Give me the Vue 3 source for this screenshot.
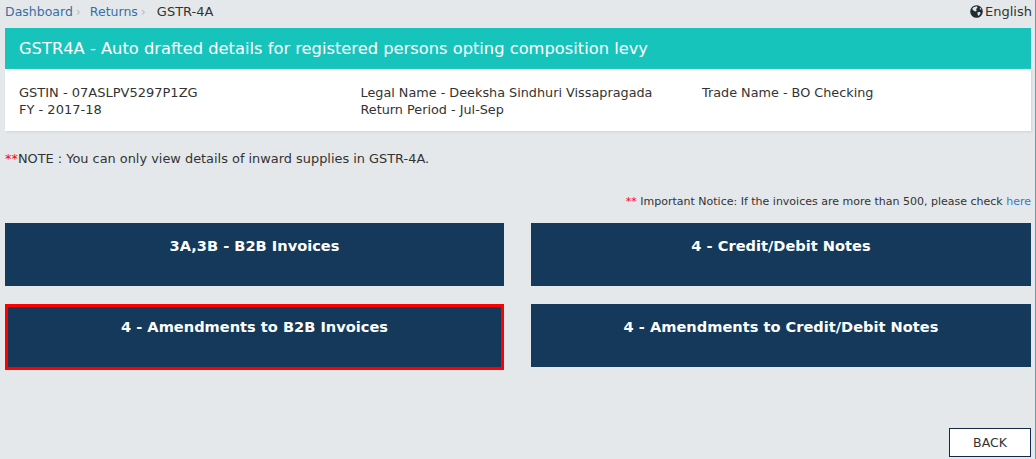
<script setup>
const info = [
  ['GSTIN - 07ASLPV5297P1ZG', 'FY - 2017-18'],
  ['Legal Name - Deeksha Sindhuri Vissapragada', 'Return Period - Jul-Sep'],
  ['Trade Name - BO Checking']
]
const tiles = [
  { label: '3A,3B - B2B Invoices' },
  { label: '4 - Credit/Debit Notes' },
  { label: '4 - Amendments to B2B Invoices', active: true },
  { label: '4 - Amendments to Credit/Debit Notes' }
]
</script>

<template>
  <div class="page">
    <div class="topbar">
      <nav class="crumbs">
        <a class="link">Dashboard</a><span class="sep">›</span>
        <a class="link">Returns</a><span class="sep wide">›</span>
        <span class="current">GSTR-4A</span>
      </nav>
      <div class="lang">
        <svg class="globe" viewBox="0 0 12 12" width="13" height="13">
          <circle cx="6" cy="6" r="5.8" fill="#1f2a33" />
          <path d="M3.2 2 L6.2 1.2 L7 2.6 L5.6 3.8 L6.2 5.2 L4.8 6 L3.2 5 L2 3.8 Z" fill="#dfe4e8" />
          <path d="M6.8 6.6 L9.2 6.4 L9.8 7.6 L8.2 10 L7.2 9.4 Z" fill="#dfe4e8" />
          <path d="M9 2.2 L10.6 3.8 L9.2 4.4 Z" fill="#dfe4e8" />
        </svg>
        <span>English</span>
      </div>
    </div>

    <header class="banner">GSTR4A - Auto drafted details for registered persons opting composition levy</header>
    <section class="card">
      <div v-for="(col, i) in info" :key="i" class="col">
        <div v-for="line in col" :key="line">{{ line }}</div>
      </div>
    </section>

    <p class="note"><span class="red">**</span>NOTE : You can only view details of inward supplies in GSTR-4A.</p>
    <p class="notice"><span class="red">**</span> Important Notice: If the invoices are more than 500, please check <a class="here">here</a></p>

    <div class="tiles">
      <button v-for="t in tiles" :key="t.label" class="tile" :class="{ active: t.active }">{{ t.label }}</button>
    </div>

    <div class="actions">
      <button class="back">BACK</button>
    </div>
  </div>
</template>

<style scoped>
.page {
  box-sizing: border-box;
  width: 1036px;
  height: 459px;
  overflow: hidden;
  padding: 0 4px 0 5px;
  background: #e4e8eb;
  border-right: 1px solid #17c4bb;
  font-family: "DejaVu Sans", Verdana, sans-serif;
  font-size: 13px;
  color: #333;
}
.topbar {
  display: flex;
  justify-content: space-between;
  align-items: center;
  height: 28px;
  padding-bottom: 5px;
  box-sizing: border-box;
}
.crumbs { font-size: 12.5px; }
.link { color: #3a6ea5; }
.sep { color: #bbb; margin: 0 9px 0 3px; }
.sep.wide { margin-right: 11px; }
.current { color: #333; font-size: 13px; }
.lang { display: flex; align-items: center; gap: 2px; margin-right: -1px; }
.globe { display: block; }
.banner {
  height: 41px;
  line-height: 41px;
  padding-left: 14px;
  background: #17c4bb;
  color: #fff;
  font-size: 16.3px;
}
.card {
  box-sizing: border-box;
  height: 62px;
  display: flex;
  padding: 15px 14px 0;
  background: #fff;
  box-shadow: 1px 1px 2px #cfd3d6;
  line-height: 17px;
  font-size: 12.8px;
}
.col { flex: none; width: 341.5px; }
.col:first-child { font-size: 13px; }
.note {
  margin: 20px 0 0;
  line-height: 16px;
  font-size: 12.9px;
}
.red { color: #f00; }
.notice {
  margin: 28px 0 0;
  line-height: 14px;
  text-align: right;
  font-size: 11px;
}
.here { color: #3a78c2; }
.tiles {
  display: grid;
  grid-template-columns: 499px 500px;
  grid-auto-rows: 63px;
  column-gap: 27px;
  row-gap: 18px;
  margin-top: 14px;
}
.tile {
  box-sizing: border-box;
  border: 0;
  margin: 0;
  padding: 14px 0 0;
  display: flex;
  justify-content: center;
  align-items: flex-start;
  background: #15395b;
  color: #fff;
  font-family: inherit;
  font-size: 14.6px;
  font-weight: 700;
  line-height: 18px;
}
.tile.active {
  height: 66px;
  border: 3px solid #f00;
  padding-top: 11px;
}
.actions {
  display: flex;
  justify-content: flex-end;
  margin-top: 61px;
}
.back {
  box-sizing: border-box;
  width: 82px;
  height: 29px;
  padding: 0;
  border: 1px solid #15284b;
  background: #fff;
  color: #333;
  font-family: inherit;
  font-size: 12.5px;
}
</style>
